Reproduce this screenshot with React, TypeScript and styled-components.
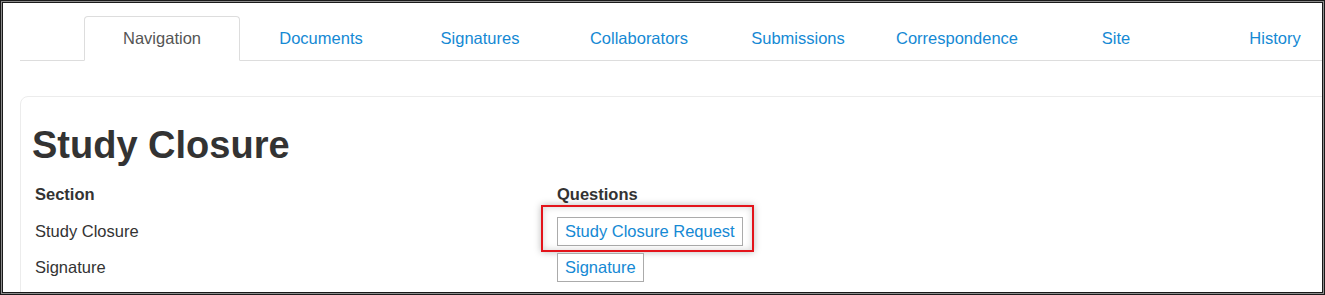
import React from "react";
import styled, { createGlobalStyle } from "styled-components";

const GlobalStyle = createGlobalStyle`
  html, body { margin: 0; padding: 0; background: #fff; }
  body { font-family: "Liberation Sans", Arial, sans-serif; }
  * { box-sizing: border-box; }
`;

const Frame = styled.div`
  width: 1325px;
  height: 295px;
  border: 1px solid #1a1a1a;
  padding: 1px;
  background: #8c8c8c;
`;

const Inner = styled.div`
  width: 100%;
  height: 100%;
  border: 1px solid #1a1a1a;
  background: #fff;
  overflow: hidden;
  padding: 13px 0 0 17px;
`;

const TabList = styled.ul`
  list-style: none;
  margin: 0;
  padding: 0 0 0 64px;
  display: flex;
  align-items: flex-end;
  border-bottom: 1px solid #dddddd;
  width: calc(100% + 200px);
  height: 45px;
`;

const Tab = styled.li<{ $active?: boolean }>`
  flex: 0 0 156px;
  height: 45px;
  margin: 0 3px -1px 0;
  border: 1px solid ${(p) => (p.$active ? "#dddddd" : "transparent")};
  border-bottom-color: ${(p) => (p.$active ? "#fff" : "transparent")};
  border-radius: 4px 4px 0 0;
  background: ${(p) => (p.$active ? "#fff" : "transparent")};
  display: flex;
  align-items: center;
  justify-content: center;
  font-size: 16.5px;
  color: ${(p) => (p.$active ? "#555555" : "#1589d4")};
  white-space: nowrap;
`;

const Card = styled.section`
  margin-top: 35px;
  width: calc(100% + 60px);
  border: 1px solid #ececec;
  border-radius: 8px;
  padding: 28px 11px 40px;
  background: #fff;
`;

const Heading = styled.h1`
  margin: 0;
  font-size: 38px;
  line-height: 41px;
  font-weight: 700;
  color: #333333;
`;

const Table = styled.div`
  margin-top: 10px;
  display: grid;
  grid-template-columns: 522px auto;
`;

const HeadCell = styled.div`
  height: 37px;
  padding: 0 3px;
  display: flex;
  align-items: center;
  font-size: 16.5px;
  font-weight: 700;
  color: #333333;
`;

const Cell = styled.div`
  height: 36px;
  padding: 0 3px;
  display: flex;
  align-items: center;
  font-size: 16.5px;
  color: #333333;
`;

const QuestionWrap = styled.div`
  position: relative;
  display: inline-flex;
`;

const QuestionButton = styled.span`
  display: inline-block;
  border: 1px solid #ababab;
  padding: 3px 7px 3px 7px;
  line-height: 21px;
  font-size: 16.5px;
  color: #1589d4;
  background: #fff;
  white-space: nowrap;
`;

const Highlight = styled.div`
  position: absolute;
  left: -16px;
  top: -11.5px;
  width: 213px;
  height: 47px;
  border: 2px solid #e3141b;
  box-shadow: 0 0 7px rgba(0, 0, 0, 0.28), inset 0 0 7px rgba(0, 0, 0, 0.18);
  pointer-events: none;
`;

const tabs = [
  "Navigation",
  "Documents",
  "Signatures",
  "Collaborators",
  "Submissions",
  "Correspondence",
  "Site",
  "History",
];

const rows = [
  { section: "Study Closure", question: "Study Closure Request", highlighted: true },
  { section: "Signature", question: "Signature", highlighted: false },
];

export default function App() {
  return (
    <>
      <GlobalStyle />
      <Frame>
        <Inner>
          <TabList>
            {tabs.map((t, i) => (
              <Tab key={t} $active={i === 0}>
                {t}
              </Tab>
            ))}
          </TabList>
          <Card>
            <Heading>Study Closure</Heading>
            <Table>
              <HeadCell>Section</HeadCell>
              <HeadCell>Questions</HeadCell>
              {rows.map((r) => (
                <React.Fragment key={r.section}>
                  <Cell>{r.section}</Cell>
                  <Cell>
                    <QuestionWrap>
                      <QuestionButton>{r.question}</QuestionButton>
                      {r.highlighted && <Highlight />}
                    </QuestionWrap>
                  </Cell>
                </React.Fragment>
              ))}
            </Table>
          </Card>
        </Inner>
      </Frame>
    </>
  );
}
